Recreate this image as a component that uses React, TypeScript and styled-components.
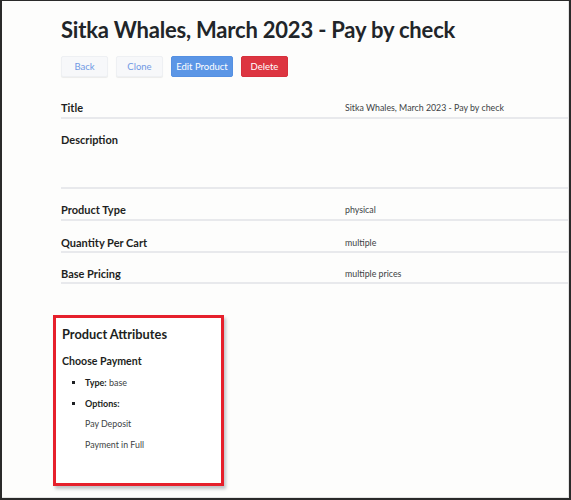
import React from "react";
import styled, { createGlobalStyle } from "styled-components";

const Global = createGlobalStyle`
  html, body { margin: 0; padding: 0; background: #fff; }
  body { font-family: "Lato", "Open Sans", sans-serif; color: #212529; }
`;

const Frame = styled.div`
  box-sizing: border-box;
  width: 571px;
  height: 500px;
  border-top: 1px solid #2a2a2a;
  border-left: 2px solid #2a2a2a;
  border-right: 2px solid #2a2a2a;
  border-bottom: 2px solid #2a2a2a;
  overflow: hidden;
  background: #fdfdfc;
`;

const Inner = styled.div`
  box-sizing: border-box;
  height: 100%;
  border-right: 1px solid #e4e4e4;
  border-bottom: 1px solid #e4e4e4;
  padding: 15px 0 0 59px;
`;

const Title = styled.h1`
  margin: 0;
  font-size: 22px;
  font-weight: 700;
  line-height: 28px;
  letter-spacing: -0.2px;
  color: #212529;
`;

const Toolbar = styled.div`
  display: flex;
  gap: 8px;
  margin-top: 12px;
`;

const Button = styled.button<{ $variant: "light" | "primary" | "danger" }>`
  box-sizing: border-box;
  height: 21px;
  width: ${(p) => (p.$variant === "primary" ? "62px" : "47px")};
  padding: 0;
  border-radius: 2px;
  font-family: inherit;
  font-size: 9.5px;
  line-height: 1;
  cursor: pointer;
  border: 1px solid
    ${(p) =>
      p.$variant === "primary" ? "#5590e2" : p.$variant === "danger" ? "#d6303c" : "#eef0f3"};
  background: ${(p) =>
    p.$variant === "primary" ? "#5b96e6" : p.$variant === "danger" ? "#dd3541" : "#f7f8fa"};
  color: ${(p) => (p.$variant === "light" ? "#7198e4" : "#fff")};
  box-shadow: ${(p) => (p.$variant === "light" ? "0 1px 1px rgba(0,0,0,0.07)" : "none")};
`;

const Table = styled.div`
  margin-top: 20px;
  display: flex;
  flex-direction: column;
`;

const Row = styled.div<{ $height: number; $pad: number }>`
  box-sizing: content-box;
  display: grid;
  grid-template-columns: 284px 1fr;
  align-items: start;
  height: ${(p) => p.$height - p.$pad}px;
  padding-top: ${(p) => p.$pad}px;
  border-bottom: 2px solid #e8e9ec;
`;

const Label = styled.div`
  font-size: 11px;
  font-weight: 700;
  line-height: 14px;
  color: #1d1f22;
`;

const Value = styled.div`
  font-size: 8.8px;
  line-height: 14px;
  color: #3c3f44;
`;

const AttrBox = styled.div`
  box-sizing: border-box;
  margin: 31px 0 0 -8px;
  width: 171px;
  height: 171px;
  border: 3px solid #e6202c;
  box-shadow: 2px 3px 3px rgba(80, 90, 100, 0.35);
  padding: 7px 0 0 6px;
  background: #fff;
`;

const AttrTitle = styled.h2`
  margin: 0;
  font-size: 12.8px;
  font-weight: 700;
  line-height: 18px;
  color: #1d1f22;
`;

const AttrSub = styled.h3`
  margin: 10px 0 0;
  font-size: 10.6px;
  font-weight: 700;
  line-height: 16px;
  color: #1d1f22;
`;

const List = styled.ul`
  margin: 4px 0 0;
  padding: 0 0 0 23px;
  list-style: square;
  font-size: 9px;
  color: #3c3f44;
`;

const Item = styled.li`
  line-height: 20.5px;
  &::marker { font-size: 9px; color: #1d1f22; }
  b { color: #1d1f22; }
`;

const OptionList = styled.div`
  padding-left: 23px;
  font-size: 8.8px;
  color: #3c3f44;
`;

const OptionItem = styled.div`
  line-height: 20.5px;
`;

const rows = [
  { label: "Title", value: "Sitka Whales, March 2023 - Pay by check", h: 20, p: 4 },
  { label: "Description", value: "", h: 68, p: 14 },
  { label: "Product Type", value: "physical", h: 30, p: 14 },
  { label: "Quantity Per Cart", value: "multiple", h: 30, p: 15 },
  { label: "Base Pricing", value: "multiple prices", h: 29, p: 14 },
];

export default function App() {
  return (
    <>
      <Global />
      <Frame>
        <Inner>
          <Title>Sitka Whales, March 2023 - Pay by check</Title>
          <Toolbar>
            <Button $variant="light">Back</Button>
            <Button $variant="light">Clone</Button>
            <Button $variant="primary">Edit Product</Button>
            <Button $variant="danger">Delete</Button>
          </Toolbar>
          <Table>
            {rows.map((r) => (
              <Row key={r.label} $height={r.h} $pad={r.p}>
                <Label>{r.label}</Label>
                <Value>{r.value}</Value>
              </Row>
            ))}
          </Table>
          <AttrBox>
            <AttrTitle>Product Attributes</AttrTitle>
            <AttrSub>Choose Payment</AttrSub>
            <List>
              <Item>
                <b>Type:</b> base
              </Item>
              <Item>
                <b>Options:</b>
              </Item>
            </List>
            <OptionList>
              <OptionItem>Pay Deposit</OptionItem>
              <OptionItem>Payment in Full</OptionItem>
            </OptionList>
          </AttrBox>
        </Inner>
      </Frame>
    </>
  );
}
